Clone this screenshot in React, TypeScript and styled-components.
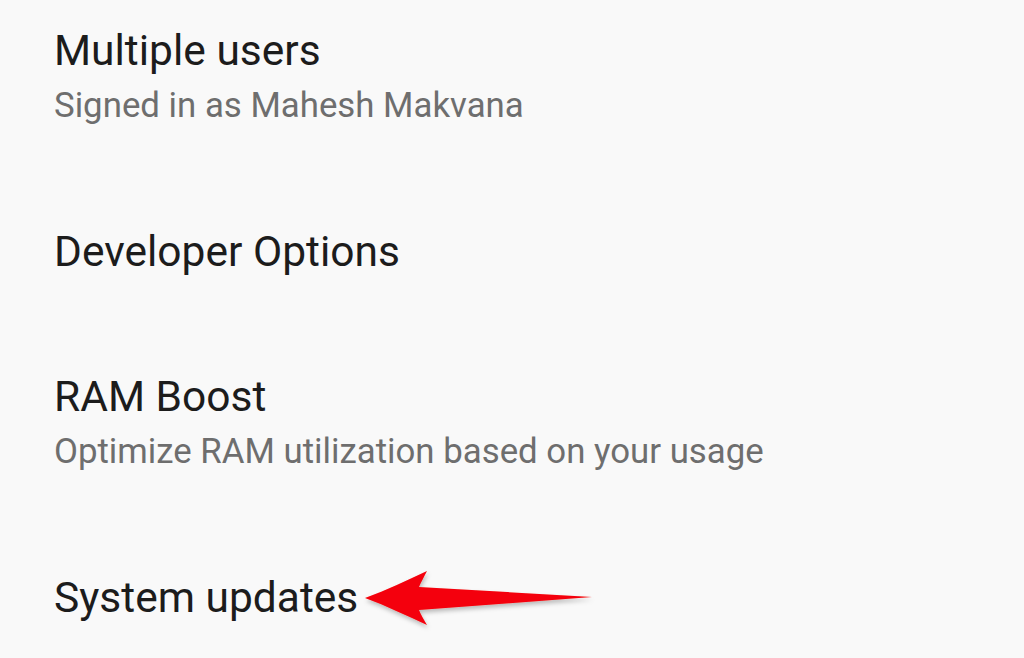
import styled, { createGlobalStyle } from "styled-components";

const GlobalStyle = createGlobalStyle`
  html, body {
    margin: 0;
    padding: 0;
    background: #f9f9f9;
    overflow: hidden;
  }
  body {
    font-family: Roboto, "Noto Sans", sans-serif;
  }
`;

type Setting = {
  title: string;
  summary?: string;
  pointed?: boolean;
};

const settings: Setting[] = [
  { title: "Multiple users", summary: "Signed in as Mahesh Makvana" },
  { title: "Developer Options" },
  { title: "RAM Boost", summary: "Optimize RAM utilization based on your usage" },
  { title: "System updates", pointed: true },
];

const Arrow = () => (
  <svg width="250" height="80" viewBox="0 0 250 80">
    <defs>
      <filter id="shade" x="-10%" y="-30%" width="120%" height="160%">
        <feDropShadow dx="1" dy="3" stdDeviation="2" floodColor="#000" floodOpacity="0.25" />
      </filter>
    </defs>
    <path
      d="M3 36 C 25 28, 45 18, 65 9 C 62 15, 59 20, 57 25 L 230 35 L 57 48 C 59 53, 62 58, 65 63 C 45 54, 25 44, 3 36 Z"
      fill="#f40009"
      filter="url(#shade)"
    />
  </svg>
);

const App = () => {
  return (
    <>
      <GlobalStyle />
      <Page>
        <List>
          {settings.map((s, index) => (
            <Item key={index}>
              <TitleRow>
                <Title>{s.title}</Title>
                {s.pointed && (
                  <Pointer>
                    <Arrow />
                  </Pointer>
                )}
              </TitleRow>
              {s.summary && <Summary>{s.summary}</Summary>}
            </Item>
          ))}
        </List>
      </Page>
    </>
  );
};

const Page = styled.div`
  width: 1024px;
  height: 658px;
  background: #f9f9f9;
  overflow: hidden;
`;

const List = styled.div`
  display: flex;
  flex-direction: column;
  margin-top: -22px;
`;

const Item = styled.div`
  display: flex;
  flex-direction: column;
  padding: 47px 54px 46px;
`;

const TitleRow = styled.div`
  display: flex;
  align-items: center;
  position: relative;
`;

const Title = styled.div`
  font-size: 42.5px;
  line-height: 52px;
  color: #1c1c1c;
  white-space: nowrap;
`;

const Pointer = styled.div`
  position: absolute;
  left: 308px;
  top: -10px;
`;

const Summary = styled.div`
  font-size: 34.8px;
  line-height: 56px;
  color: #6e6e6e;
  white-space: nowrap;
`;

export default App;
